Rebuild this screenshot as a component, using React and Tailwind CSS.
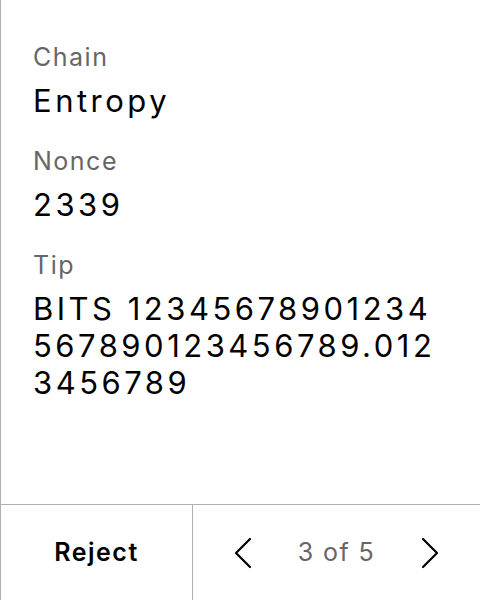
import React from "react";

const fields = [
  { label: "Chain", value: "Entropy" },
  { label: "Nonce", value: "2339" },
  { label: "Tip", value: "BITS 12345678901234567890123456789.0123456789" },
];

const Chevron = ({ dir }) => (
  <svg width="18" height="32" viewBox="0 0 18 32" fill="none" stroke="currentColor" strokeWidth="2.2" strokeLinecap="round" strokeLinejoin="round">
    {dir === "left" ? <polyline points="16,2 2,16 16,30" /> : <polyline points="2,2 16,16 2,30" />}
  </svg>
);

export default function App() {
  return (
    <div
      className="h-screen flex flex-col bg-white border-l border-[#b0b0b0] text-black"
      style={{ fontFamily: "Inter, 'Noto Sans', sans-serif" }}
    >
      {/* DETAILS */}
      <div className="flex-1 px-8 pt-[41px] flex flex-col gap-[26px]">
        {fields.map((f) => (
          <div key={f.label} className="flex flex-col gap-[9px]">
            <div className="text-[25px] leading-8 tracking-[1.5px] text-[#666666]">{f.label}</div>
            <div className="text-[31px] leading-[37px] tracking-[3.5px] break-all">{f.value}</div>
          </div>
        ))}
      </div>

      {/* FOOTER */}
      <div className="h-24 flex border-t border-[#b0b0b0]">
        <button className="w-48 border-r border-[#b0b0b0] flex items-center justify-center text-[25px] font-semibold tracking-[1.5px]">
          Reject
        </button>
        <div className="flex-1 flex items-center justify-center gap-[46px]">
          <Chevron dir="left" />
          <span className="text-[25px] tracking-[1.4px] text-[#666666]">3 of 5</span>
          <Chevron dir="right" />
        </div>
      </div>
    </div>
  );
}
